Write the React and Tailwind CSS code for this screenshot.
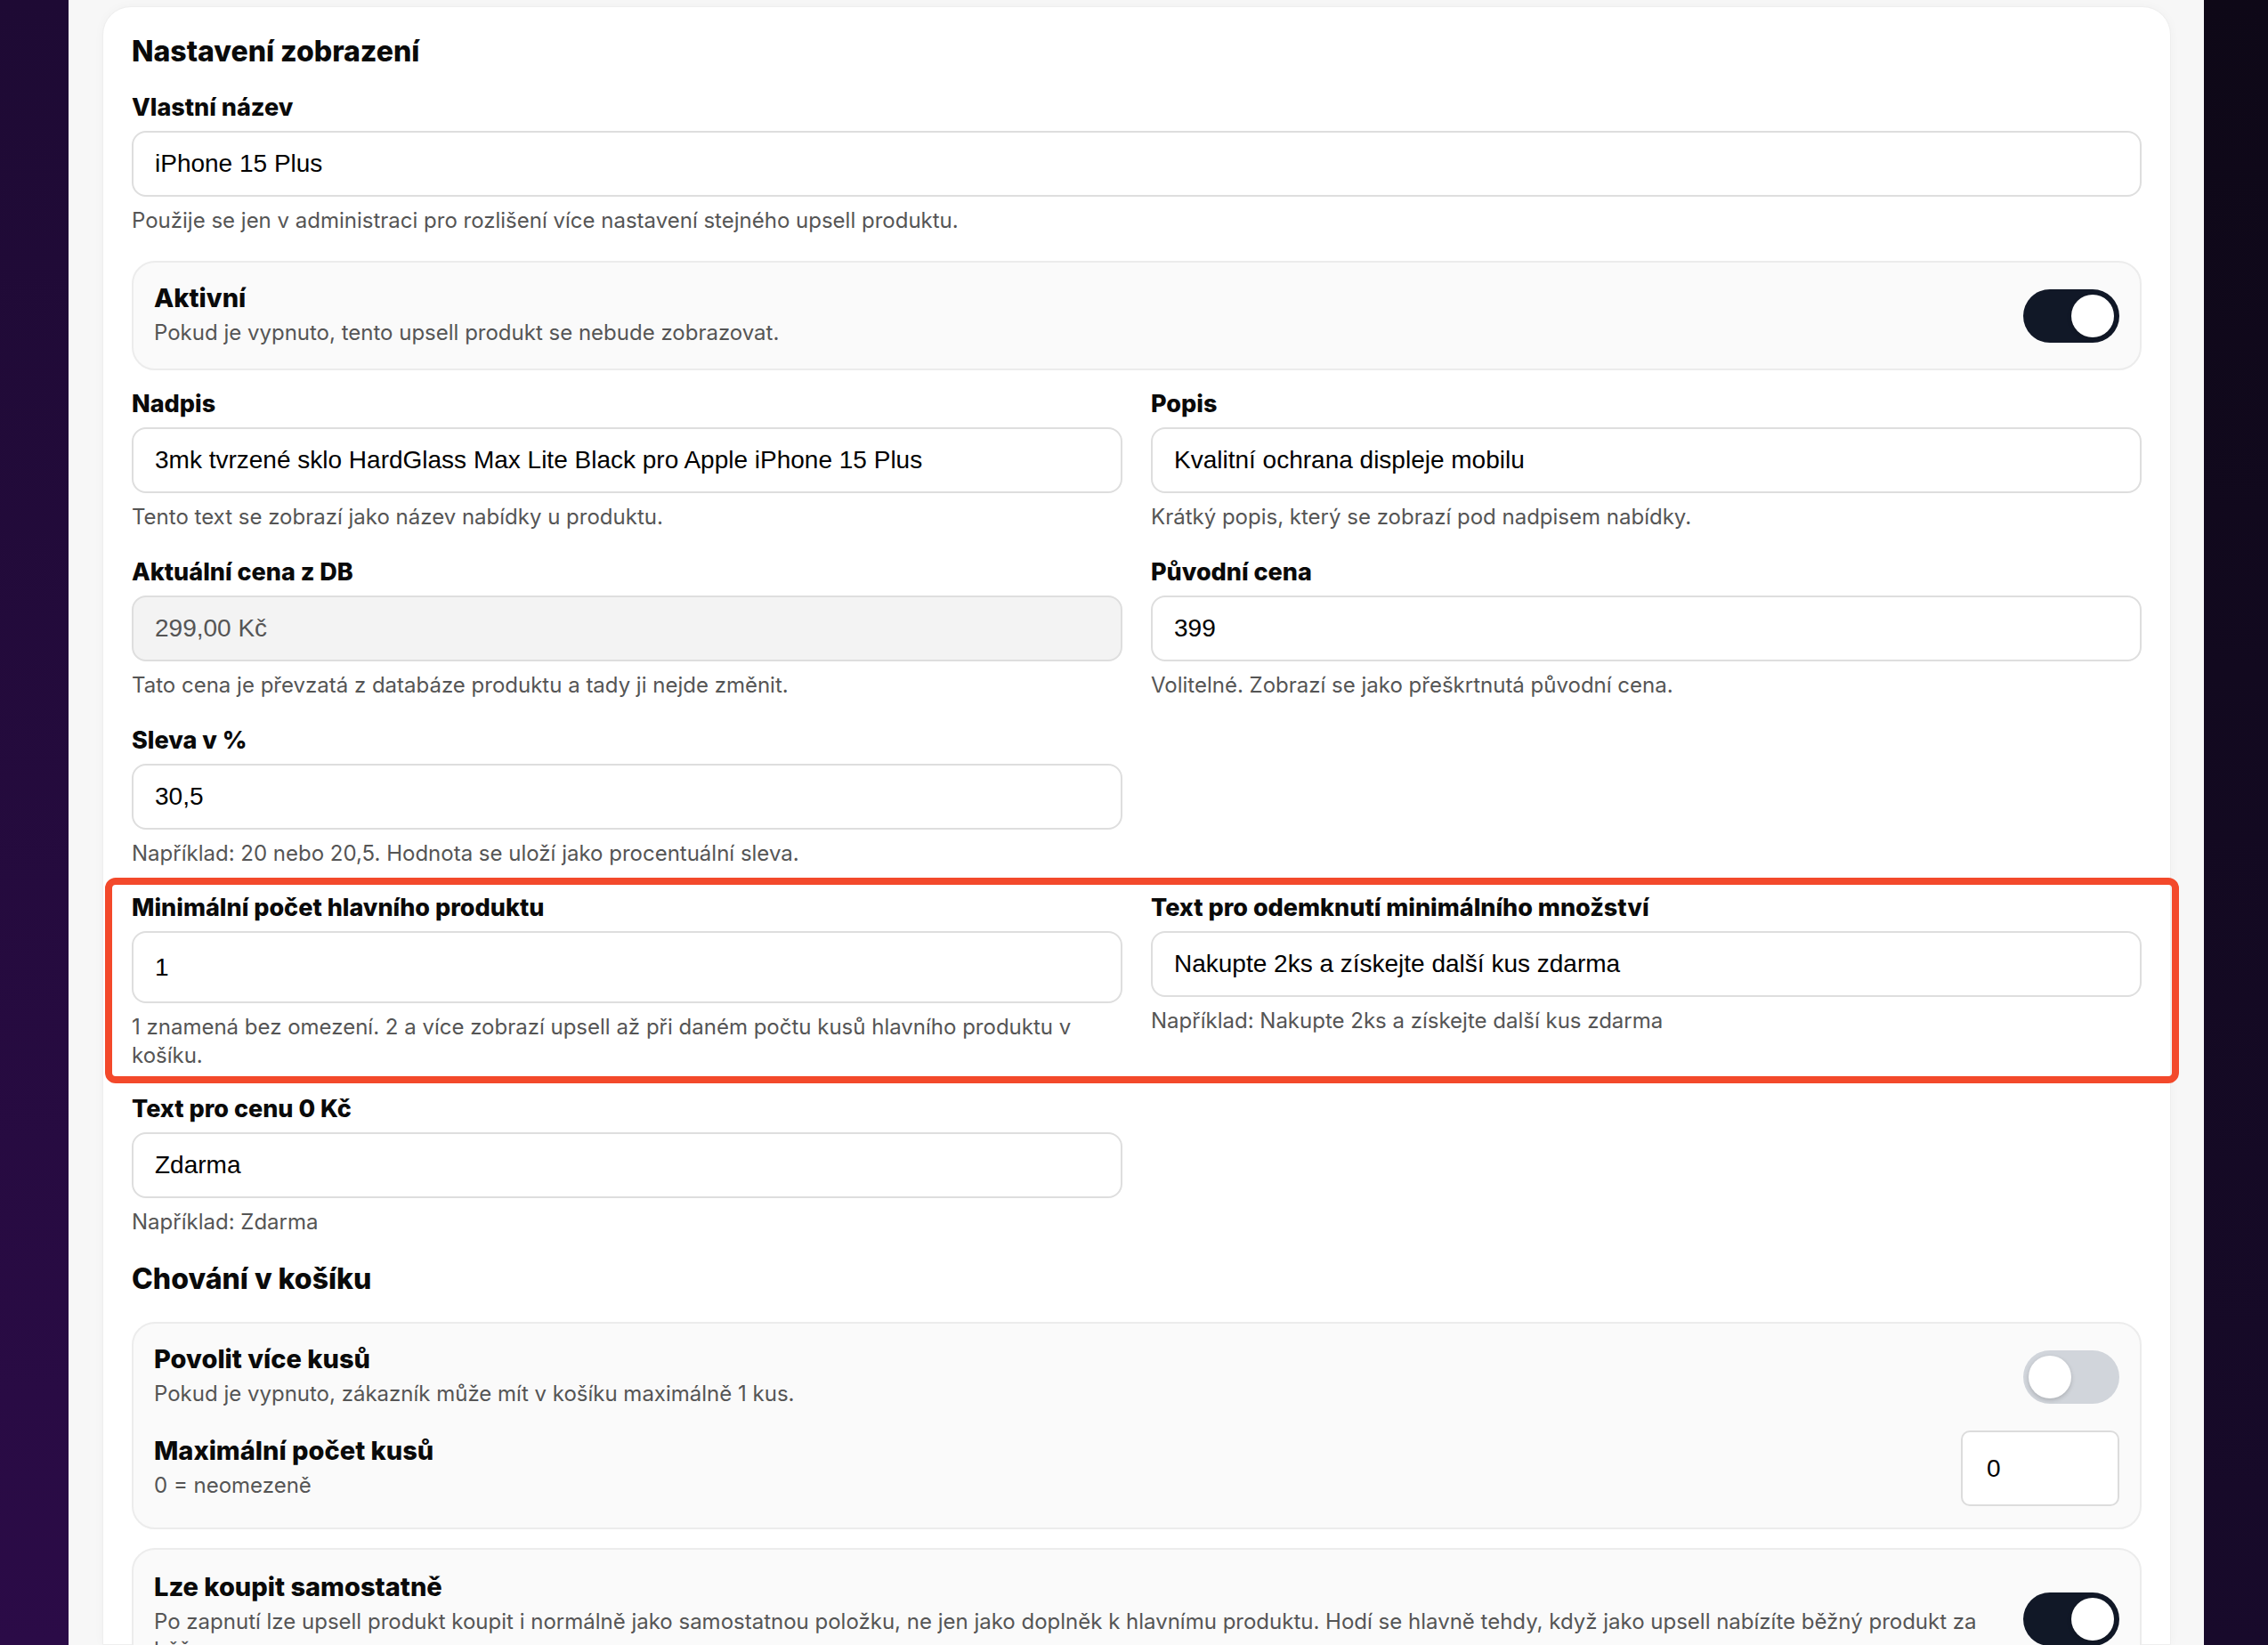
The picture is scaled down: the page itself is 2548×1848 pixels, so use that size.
import React from "react";

const LABEL = "block text-[27px] leading-[32px] font-extrabold text-[#0a0a0a]";
const HELP = "text-[24px] leading-[32px] text-[#555555]";
const TITLE = "text-[29px] leading-[32px] font-extrabold text-[#0a0a0a]";

function TextInput({ value, disabled, tall }) {
  return (
    <input
      readOnly
      defaultValue={value}
      className={`w-full ${tall ? "h-[81px]" : "h-[74px]"} rounded-[16px] border-2 border-[#dedede] px-[24px] text-[28px] font-['Liberation_Sans',Arial,sans-serif] outline-none ${
        disabled ? "bg-[#f3f3f3] text-[#555555]" : "bg-white text-black"
      }`}
    />
  );
}

function Field({ label, value, help, disabled, tall, className = "" }) {
  return (
    <div className={`flex flex-col ${className}`}>
      <label className={LABEL}>{label}</label>
      <div className="mt-[10px]">
        <TextInput value={value} disabled={disabled} tall={tall} />
      </div>
      {help && <p className={`mt-[11px] ${HELP}`}>{help}</p>}
    </div>
  );
}

function Toggle({ on }) {
  return (
    <div
      className={`w-[108px] h-[60px] shrink-0 rounded-full p-[6px] flex ${
        on ? "bg-[#111827] justify-end" : "bg-[#d1d5db] justify-start"
      }`}
    >
      <div className="w-[48px] h-[48px] rounded-full bg-white shadow-[0_2px_5px_rgba(0,0,0,0.18)]" />
    </div>
  );
}

function Heading({ children, className = "" }) {
  return (
    <h2 className={`text-[32px] leading-[40px] font-extrabold text-[#0a0a0a] ${className}`}>
      {children}
    </h2>
  );
}

export default function App() {
  return (
    <div className="w-[2548px] h-[1848px] overflow-hidden flex font-['Inter',sans-serif]">
      <div className="w-[77px] shrink-0 bg-linear-to-b from-[#1e0a34] to-[#2b0b47]" />
      <div className="flex-1 min-w-0 bg-[#f7f7f7] pl-[38px] pr-[37px] pt-[7px]">
        <div className="h-full bg-white rounded-t-[32px] border border-[#eeeeee] shadow-[0_0_12px_rgba(0,0,0,0.03)] px-[32px] pt-[30px]">
          <Heading>Nastavení zobrazení</Heading>

          <Field
            className="mt-[27px]"
            label="Vlastní název"
            value="iPhone 15 Plus"
            help="Použije se jen v administraci pro rozlišení více nastavení stejného upsell produktu."
          />

          <div className="mt-[29px] flex items-center justify-between gap-[48px] rounded-[26px] border-2 border-[#ececec] bg-[#fafafa] px-[23px] py-[24px]">
            <div>
              <div className={TITLE}>Aktivní</div>
              <div className={`mt-[7px] ${HELP}`}>Pokud je vypnuto, tento upsell produkt se nebude zobrazovat.</div>
            </div>
            <Toggle on />
          </div>

          <div className="mt-[22px] grid grid-cols-2 gap-x-[32px] gap-y-[30px]">
            <Field
              label="Nadpis"
              value="3mk tvrzené sklo HardGlass Max Lite Black pro Apple iPhone 15 Plus"
              help="Tento text se zobrazí jako název nabídky u produktu."
            />
            <Field
              label="Popis"
              value="Kvalitní ochrana displeje mobilu"
              help="Krátký popis, který se zobrazí pod nadpisem nabídky."
            />
            <Field
              label="Aktuální cena z DB"
              value="299,00 Kč"
              disabled
              help="Tato cena je převzatá z databáze produktu a tady ji nejde změnit."
            />
            <Field
              label="Původní cena"
              value="399"
              help="Volitelné. Zobrazí se jako přeškrtnutá původní cena."
            />
            <Field
              label="Sleva v %"
              value="30,5"
              help="Například: 20 nebo 20,5. Hodnota se uloží jako procentuální sleva."
            />
            <div />
          </div>

          <div className="mt-[11px] -ml-[30px] -mr-[42px] border-[8px] border-[#f3492b] rounded-[12px] pl-[22px] pr-[34px] pt-[10px] pb-[7px] grid grid-cols-2 gap-x-[32px] items-start">
            <Field
              label="Minimální počet hlavního produktu"
              value="1"
              tall
              help="1 znamená bez omezení. 2 a více zobrazí upsell až při daném počtu kusů hlavního produktu v košíku."
            />
            <Field
              label="Text pro odemknutí minimálního množství"
              value="Nakupte 2ks a získejte další kus zdarma"
              help="Například: Nakupte 2ks a získejte další kus zdarma"
            />
          </div>

          <div className="mt-[13px] grid grid-cols-2 gap-x-[32px]">
            <Field label="Text pro cenu 0 Kč" value="Zdarma" help="Například: Zdarma" />
            <div />
          </div>

          <Heading className="mt-[28px]">Chování v košíku</Heading>

          <div className="mt-[28px] rounded-[26px] border-2 border-[#ececec] bg-[#fafafa] px-[23px] py-[24px]">
            <div className="flex items-center justify-between gap-[48px]">
              <div>
                <div className={TITLE}>Povolit více kusů</div>
                <div className={`mt-[7px] ${HELP}`}>Pokud je vypnuto, zákazník může mít v košíku maximálně 1 kus.</div>
              </div>
              <Toggle on={false} />
            </div>
            <div className="mt-[25px] flex items-center justify-between gap-[48px]">
              <div>
                <div className={TITLE}>Maximální počet kusů</div>
                <div className={`mt-[7px] ${HELP}`}>0 = neomezeně</div>
              </div>
              <input
                readOnly
                defaultValue="0"
                className="w-[178px] h-[85px] shrink-0 rounded-[10px] border-2 border-[#dcdcdc] bg-white px-[27px] text-[28px] text-black font-['Liberation_Sans',Arial,sans-serif] outline-none"
              />
            </div>
          </div>

          <div className="mt-[21px] flex items-center justify-between gap-[48px] rounded-[26px] border-2 border-[#ececec] bg-[#fafafa] px-[23px] pt-[26px] pb-[24px]">
            <div>
              <div className={TITLE}>Lze koupit samostatně</div>
              <div className={`mt-[7px] ${HELP}`}>
                Po zapnutí lze upsell produkt koupit i normálně jako samostatnou položku, ne jen jako doplněk k hlavnímu produktu. Hodí se hlavně tehdy, když jako upsell nabízíte běžný produkt za běžnou cenu.
              </div>
            </div>
            <Toggle on />
          </div>
        </div>
      </div>
      <div className="w-[72px] shrink-0 bg-linear-to-b from-[#0e0817] to-[#180a2b]" />
    </div>
  );
}
